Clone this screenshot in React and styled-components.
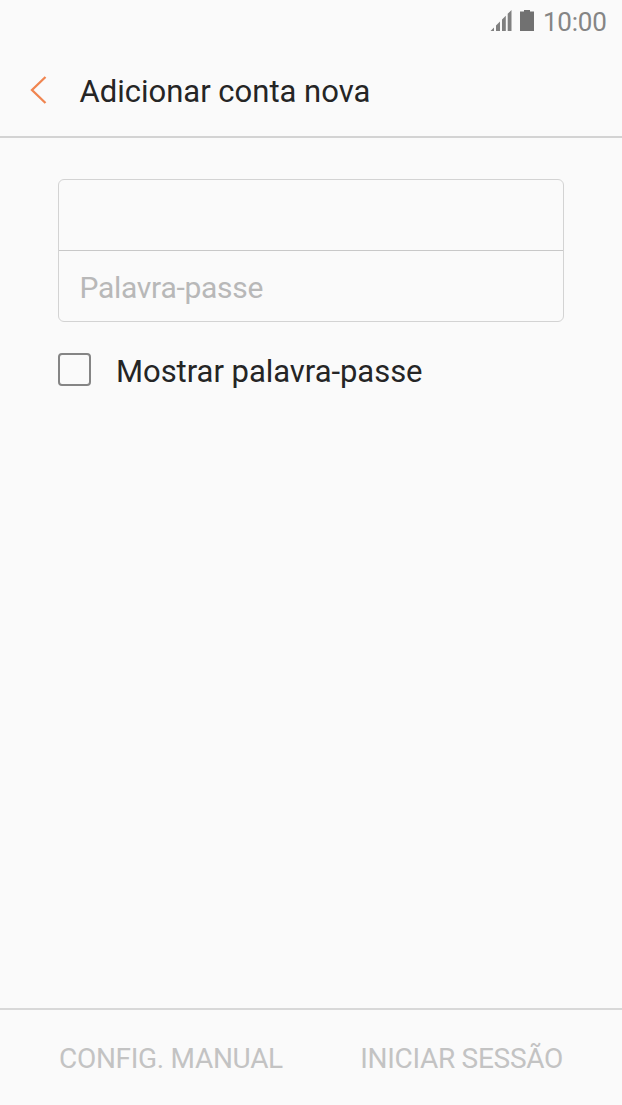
import React, { useState } from 'react'
import styled, { createGlobalStyle } from 'styled-components'

const GlobalStyle = createGlobalStyle`
    * {
        box-sizing: border-box;
    }
    body {
        margin: 0;
        background-color: #fafafa;
        font-family: Roboto, sans-serif;
    }
`

const Container = styled.div`
    height: 1105px;
    display: flex;
    flex-direction: column;
    background-color: #fafafa;
`

const StatusBar = styled.div`
    height: 44px;
    padding-right: 14px;
    display: flex;
    justify-content: flex-end;
    align-items: flex-start;
    color: #858585;
`

const StatusIcon = styled.svg`
    margin-top: 10px;
    margin-right: ${(props) => props.$gap}px;
    fill: ${(props) => props.$color};
`

const Clock = styled.span`
    width: 65px;
    font-size: 26px;
    letter-spacing: -0.25px;
    line-height: 44px;
    height: 44px;
`

const Header = styled.header`
    height: 94px;
    padding-left: 30px;
    display: flex;
    align-items: center;
    border-bottom: 2px solid #d3d3d3;
`

const BackButton = styled.button`
    width: 49.5px;
    height: 28px;
    padding: 0;
    border: none;
    background: none;
    text-align: left;
`

const Title = styled.h1`
    margin: 2px 0 0;
    font-size: 31px;
    font-weight: 400;
    color: #252525;
    white-space: nowrap;
`

const Form = styled.form`
    flex: 1;
    padding: 41px 58px 0;
`

const Fields = styled.div`
    height: 143px;
    border: 1px solid #d3d3d3;
    border-radius: 6px;
`

const Input = styled.input`
    display: block;
    width: 100%;
    height: 70px;
    padding: 0 20.5px;
    border: none;
    outline: none;
    background: transparent;
    font-family: inherit;
    font-size: 30px;
    letter-spacing: -0.28px;
    color: #252525;

    & + & {
        height: 71px;
        padding-top: 2px;
        border-top: 1px solid #c8c8c8;
    }

    &::placeholder {
        color: #b8b8b8;
        opacity: 1;
    }
`

const CheckRow = styled.label`
    margin-top: 27px;
    height: 40px;
    display: flex;
    align-items: center;
    font-size: 31px;
    letter-spacing: -0.04px;
    color: #252525;
`

const CheckText = styled.span`
    padding-top: 5px;
`

const Checkbox = styled.input`
    appearance: none;
    width: 33px;
    height: 33px;
    margin: 0 25px 0 0;
    border: 2px solid #858585;
    border-radius: 4px;
`

const Footer = styled.footer`
    height: 97px;
    padding: 2px 59px 0;
    display: flex;
    justify-content: space-between;
    align-items: center;
    border-top: 2px solid #d8d8d8;
`

const Action = styled.button`
    padding: 0;
    border: none;
    background: none;
    font-family: inherit;
    font-size: 28px;
    letter-spacing: -0.3px;
    color: #c3c3c3;
`

const App = () => {
    const [show, setShow] = useState(false)

    return (
        <Container>
            <GlobalStyle />
            <StatusBar>
                <StatusIcon $gap={8} $color="#808080" width="22" height="22" viewBox="0 0 22 22">
                    <path d="M0.5 21L4 17.5V21ZM6 21V15.5L10 11.5V21ZM12 21V9.5L15.8 5.7V21ZM17.7 21V3.8L21.5 0V21Z" />
                </StatusIcon>
                <StatusIcon $gap={9} $color="#717171" width="14" height="22" viewBox="0 0 14 22">
                    <path d="M4 0H10V1.5H14V21H0V1.5H4Z" />
                </StatusIcon>
                <Clock>10:00</Clock>
            </StatusBar>
            <Header>
                <BackButton aria-label="Voltar">
                    <svg width="17" height="28" viewBox="0 0 17 28" fill="none" stroke="#f08550" strokeWidth="2.3">
                        <path d="M15.5 1L2 14L15.5 27" />
                    </svg>
                </BackButton>
                <Title>Adicionar conta nova</Title>
            </Header>
            <Form>
                <Fields>
                    <Input type="text" />
                    <Input type={show ? 'text' : 'password'} placeholder="Palavra-passe" />
                </Fields>
                <CheckRow>
                    <Checkbox type="checkbox" checked={show} onChange={(e) => setShow(e.target.checked)} />
                    <CheckText>Mostrar palavra-passe</CheckText>
                </CheckRow>
            </Form>
            <Footer>
                <Action>CONFIG. MANUAL</Action>
                <Action>INICIAR SESSÃO</Action>
            </Footer>
        </Container>
    )
}

export default App
